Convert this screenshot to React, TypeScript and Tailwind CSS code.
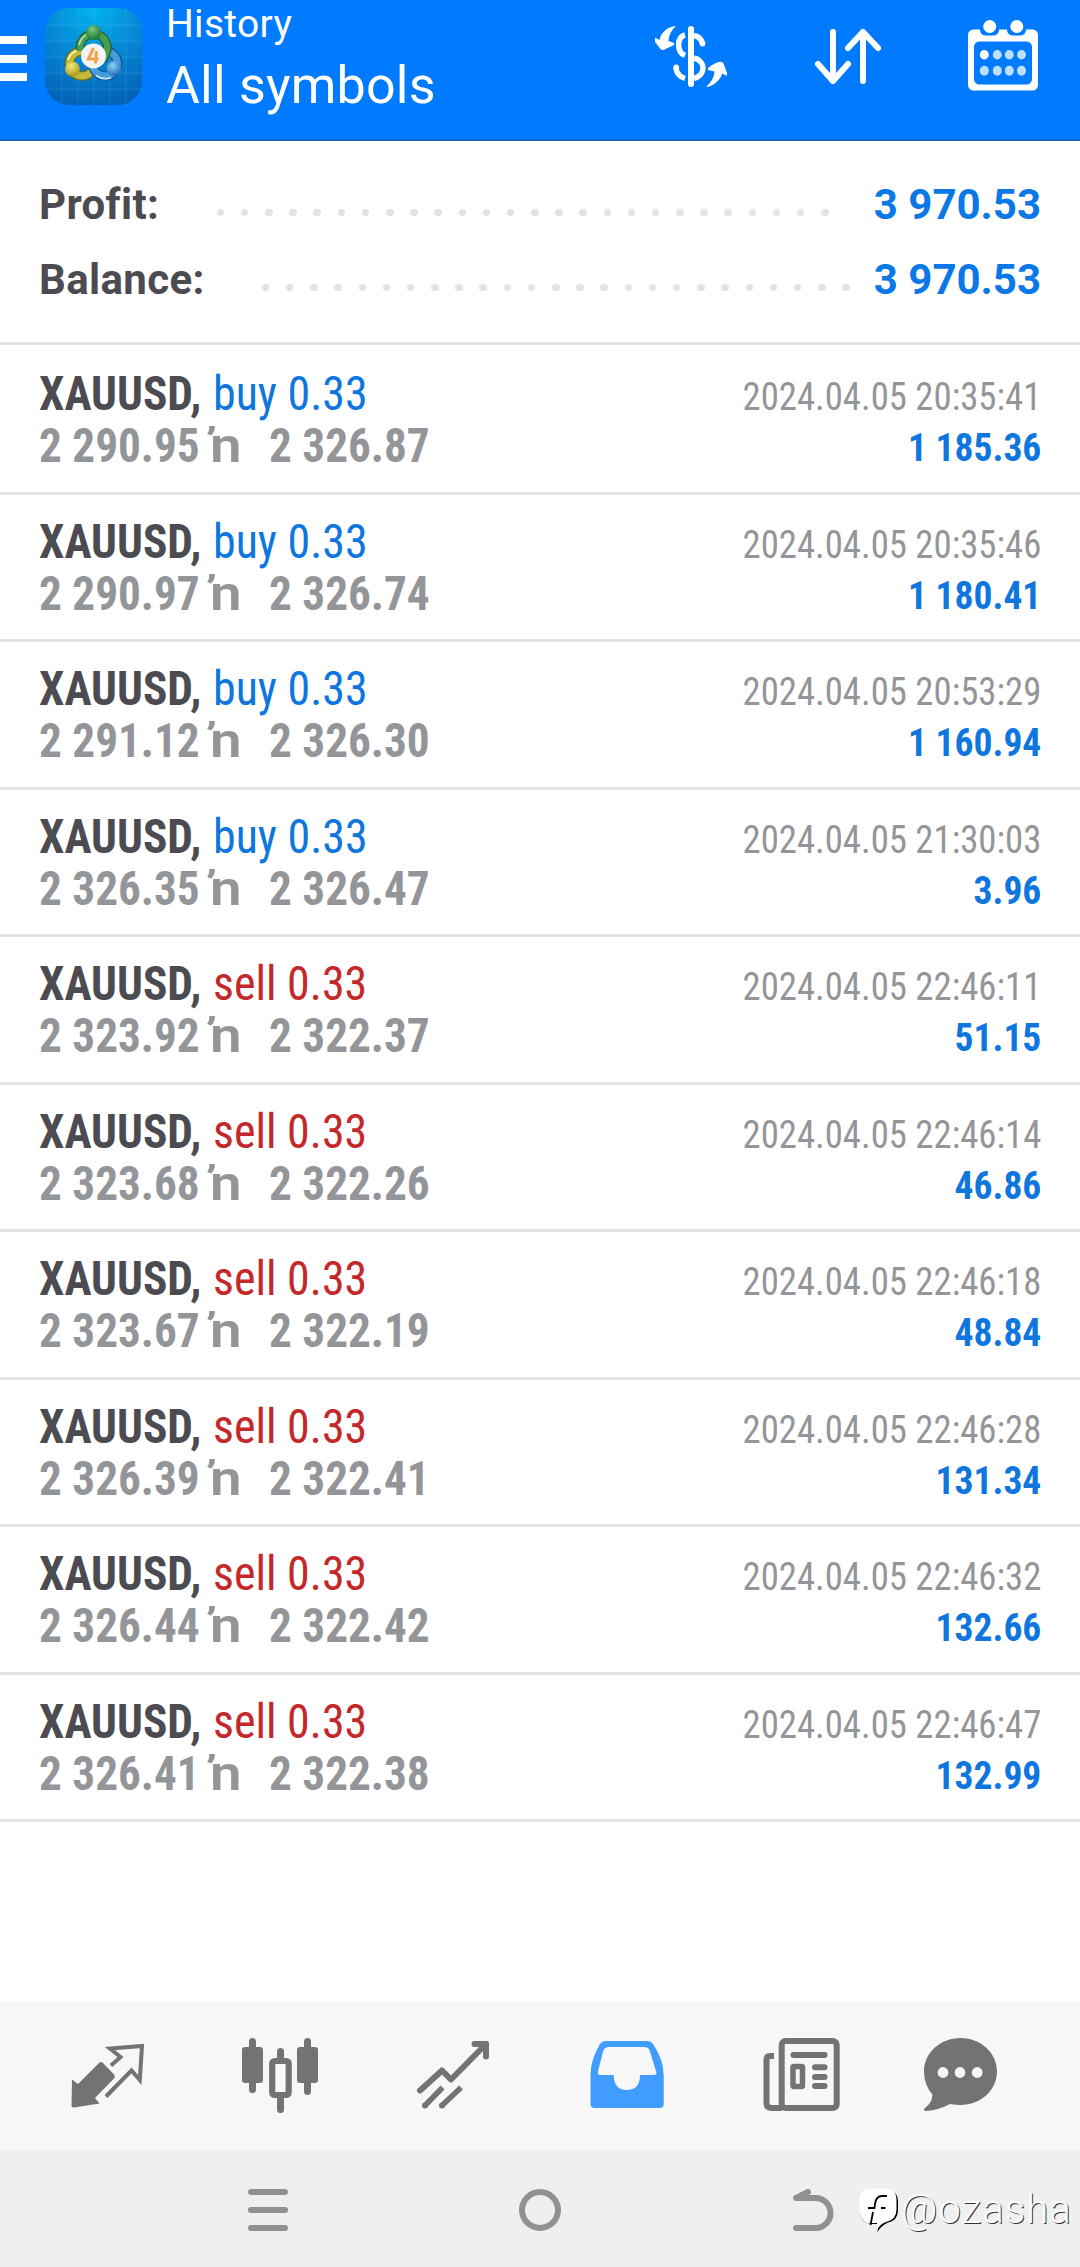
import clsx from 'clsx';

type Deal = {
  symbol: string;
  side: 'buy' | 'sell';
  volume: string;
  open: string;
  close: string;
  time: string;
  profit: string;
};

const DEALS: Deal[] = [
  { symbol: 'XAUUSD', side: 'buy', volume: '0.33', open: '2 290.95', close: '2 326.87', time: '2024.04.05 20:35:41', profit: '1 185.36' },
  { symbol: 'XAUUSD', side: 'buy', volume: '0.33', open: '2 290.97', close: '2 326.74', time: '2024.04.05 20:35:46', profit: '1 180.41' },
  { symbol: 'XAUUSD', side: 'buy', volume: '0.33', open: '2 291.12', close: '2 326.30', time: '2024.04.05 20:53:29', profit: '1 160.94' },
  { symbol: 'XAUUSD', side: 'buy', volume: '0.33', open: '2 326.35', close: '2 326.47', time: '2024.04.05 21:30:03', profit: '3.96' },
  { symbol: 'XAUUSD', side: 'sell', volume: '0.33', open: '2 323.92', close: '2 322.37', time: '2024.04.05 22:46:11', profit: '51.15' },
  { symbol: 'XAUUSD', side: 'sell', volume: '0.33', open: '2 323.68', close: '2 322.26', time: '2024.04.05 22:46:14', profit: '46.86' },
  { symbol: 'XAUUSD', side: 'sell', volume: '0.33', open: '2 323.67', close: '2 322.19', time: '2024.04.05 22:46:18', profit: '48.84' },
  { symbol: 'XAUUSD', side: 'sell', volume: '0.33', open: '2 326.39', close: '2 322.41', time: '2024.04.05 22:46:28', profit: '131.34' },
  { symbol: 'XAUUSD', side: 'sell', volume: '0.33', open: '2 326.44', close: '2 322.42', time: '2024.04.05 22:46:32', profit: '132.66' },
  { symbol: 'XAUUSD', side: 'sell', volume: '0.33', open: '2 326.41', close: '2 322.38', time: '2024.04.05 22:46:47', profit: '132.99' },
];

function AppLogo() {
  return (
    <svg width="97" height="97" viewBox="0 0 97 97">
      <defs>
        <radialGradient id="tile" cx="0.5" cy="0" r="1">
          <stop offset="0" stopColor="#00b4f0" />
          <stop offset="0.5" stopColor="#0788d4" />
          <stop offset="1" stopColor="#0263b8" />
        </radialGradient>
        <radialGradient id="green" cx="0.4" cy="0.3" r="0.7">
          <stop offset="0" stopColor="#7cc47a" />
          <stop offset="1" stopColor="#1c7a34" />
        </radialGradient>
        <radialGradient id="yellow" cx="0.4" cy="0.3" r="0.7">
          <stop offset="0" stopColor="#f2ea80" />
          <stop offset="1" stopColor="#a89a1c" />
        </radialGradient>
        <radialGradient id="blue" cx="0.4" cy="0.3" r="0.7">
          <stop offset="0" stopColor="#8fd0f5" />
          <stop offset="1" stopColor="#1c70b8" />
        </radialGradient>
      </defs>
      <rect width="97" height="97" rx="24" fill="url(#tile)" />
      <path
        d="M17 0V97M33 0V97M49 0V97M65 0V97M81 0V97M0 17H97M0 33H97M0 49H97M0 65H97M0 81H97"
        stroke="#8fdcff"
        strokeOpacity="0.16"
        fill="none"
      />
      <g fill="none">
        <circle cx="37" cy="55.500" r="12.500" stroke="#6f6f1a" strokeWidth="9.500" />
        <circle cx="37" cy="55.500" r="12.500" stroke="#c4ba3a" strokeWidth="7" />
        <circle cx="60" cy="55.500" r="12.500" stroke="#0d5796" strokeWidth="9.500" />
        <circle cx="60" cy="55.500" r="12.500" stroke="#459cd8" strokeWidth="7" />
        <path d="M35.500 42.500A13.500 13.500 0 1 1 61 45Q60 49 57 52" stroke="#176436" strokeWidth="9" />
        <path d="M35.500 42.500A13.500 13.500 0 1 1 61 45Q60 49 57 52" stroke="#4a9c50" strokeWidth="6.500" />
        <path d="M34 37A16 16 0 0 1 41 27" stroke="#b8e0b0" strokeWidth="1.800" />
        <path d="M23 52A15 15 0 0 1 32 42.500" stroke="#fbf6b0" strokeWidth="1.800" />
        <path d="M51 67.500A16 16 0 0 0 66 69.500" stroke="#c0e6fb" strokeWidth="1.800" />
      </g>
      <circle cx="48.700" cy="24.500" r="7.500" fill="url(#green)" />
      <circle cx="27.500" cy="61" r="7.500" fill="url(#yellow)" />
      <circle cx="69" cy="60.500" r="7.500" fill="url(#blue)" />
      <circle cx="48.500" cy="48" r="12.500" fill="#f4f4f4" />
      <path d="M48.500 40L43.500 51H53.500M51.500 43L50.500 55.500" stroke="#f3a04a" strokeWidth="3" fill="none" />
    </svg>
  );
}

function CurrencyIcon() {
  return (
    <svg width="80" height="70" viewBox="650 22 80 70" fill="none" stroke="#fff">
      <path d="M691 29V84" strokeWidth="6" strokeLinecap="round" />
      <path d="M685 35C676.500 37 676.500 52 685 55.500M694 35.500Q701 37 702.500 43.500M694 58C706 61 706 75 694 78.500M676 68Q677 76 685 78.500" strokeWidth="5.500" />
      <circle cx="702.500" cy="43.500" r="2.900" fill="#fff" stroke="none" />
      <circle cx="676.200" cy="67.500" r="2.900" fill="#fff" stroke="none" />
      <path
        d="M676 26C668 26.500 661 32 659.500 40L655 37.500V42L660.500 49Q661.500 50.500 664 49.800L674 45V43L668.500 41Q669 32 676 26Z"
        fill="#fff"
        stroke="none"
      />
      <path
        d="M706 87C714 86 720.500 80 722 73.500L727 76V73L723.500 63.500Q722.500 61.500 720 61.800Q714 63 708 68V70L714.500 71.500Q714 80 706 87Z"
        fill="#fff"
        stroke="none"
      />
    </svg>
  );
}

function SortIcon() {
  return (
    <svg
      width="70"
      height="60"
      viewBox="813 27 70 60"
      fill="none"
      stroke="#fff"
      strokeWidth="6"
      strokeLinecap="round"
      strokeLinejoin="round"
    >
      <path d="M833 32V81M818 64L833 81L848 64" />
      <path d="M863 81V32M848 48L863 32L878 48" />
    </svg>
  );
}

function CalendarIcon() {
  const columns = [984.3, 997.3, 1009.3, 1021.5];
  return (
    <svg width="70" height="71" viewBox="968 19.500 70 71">
      <rect x="968" y="29" width="70" height="61" rx="5.500" fill="#fff" />
      <rect x="974" y="41" width="58" height="43" rx="5.500" fill="#007aff" />
      <path d="M980 26V30Q981 35 986 35H993Q998 35 999 30V26ZM1007 26V30Q1008 35 1013 35H1020Q1025 35 1026 30V26Z" fill="#007aff" />
      <circle cx="989.700" cy="26" r="6.500" fill="#fff" />
      <circle cx="1016.800" cy="26" r="6.500" fill="#fff" />
      {columns.map((x, i) => (
        <g key={x}>
          <ellipse cx={x} cy="54.300" rx="4.500" ry="4.700" fill={i === 0 ? '#fff' : '#bfdfff'} />
          <ellipse cx={x} cy="70.200" rx="4.500" ry="5" fill="#bfdfff" />
        </g>
      ))}
    </svg>
  );
}

function Header() {
  return (
    <header className="flex h-[141px] items-start border-b-2 border-[#0f68c8] bg-[#007aff] text-white">
      <div className="mt-9 flex w-[27px] flex-col gap-[10.5px]">
        <span className="h-2 bg-white" />
        <span className="h-2 bg-white" />
        <span className="h-2 bg-white" />
      </div>
      <div className="mt-2 ml-[18px]">
        <AppLogo />
      </div>
      <div className="ml-6 flex-1">
        <div className="mt-px text-[39px] leading-[46px] tracking-[0.3px]">History</div>
        <div className="mt-2 text-[52px] leading-[62px] tracking-[0.2px]">All symbols</div>
      </div>
      <div className="mr-[42px] flex items-start">
        <div className="mt-[22px]">
          <CurrencyIcon />
        </div>
        <div className="mt-[27px] ml-[83px]">
          <SortIcon />
        </div>
        <div className="mt-[19.5px] ml-[85px]">
          <CalendarIcon />
        </div>
      </div>
    </header>
  );
}

function SummaryRow({ label, value, dots, className }: { label: string; value: string; dots: number; className: string }) {
  return (
    <div className="flex h-[75px] items-center justify-between text-[42px] font-bold">
      <span className="tracking-[0.35px] text-[#4c4b52]">{label}</span>
      <div className={clsx('mt-4 ml-auto flex justify-between', className)}>
        {Array.from({ length: dots }, (_, i) => (
          <span key={i} className="size-[7.5px] rounded-full bg-[#e3e3e4]" />
        ))}
      </div>
      <span className="text-[#0b78e8]">{value}</span>
    </div>
  );
}

function DealRow({ deal }: { deal: Deal }) {
  return (
    <div className="flex h-[147.5px] justify-between border-b-[3px] border-[#e3e3e4] px-[39px] font-stretch-condensed">
      <div className="pt-[22px] text-[47.5px] leading-[51px]">
        <div className="flex">
          <span className="w-[174px] origin-left scale-x-[0.955] font-bold text-[#4c4b52]">{deal.symbol},</span>
          <span className={clsx('origin-left scale-x-[0.967]', deal.side === 'buy' ? 'text-[#0e76de]' : 'text-[#c4282b]')}>
            {deal.side} {deal.volume}
          </span>
        </div>
        <div className="flex h-[51px] items-baseline font-bold text-[#949599]">
          <span className="w-[171px] origin-left scale-x-[0.952]">{deal.open}</span>
          <span className="w-[59px] origin-left scale-x-[1.18] text-[48px] font-semibold font-stretch-normal">ŉ</span>
          <span className="origin-left scale-x-[0.952]">{deal.close}</span>
        </div>
      </div>
      <div className="pt-[24px] text-right text-[39.5px] leading-[51px]">
        <div className="origin-right scale-x-[0.93] text-[#949599]">{deal.time}</div>
        <div className="origin-right scale-x-[0.95] font-bold text-[#0e76de]">{deal.profit}</div>
      </div>
    </div>
  );
}

function TabBar() {
  return (
    <nav className="flex h-[148px] items-center bg-[#f7f7f7] text-[#737373]">
      <svg width="1080" height="148" viewBox="0 2002 1080 148" fill="none" stroke="currentColor">
        {/* trade */}
        <path
          d="M72 2079.500L78 2084L99 2063Q101 2061 103 2063L114 2074.500Q115.500 2076.500 114 2078.500L95 2098L99.500 2103.500L74 2107.500Q71.500 2107.500 71.500 2105Z"
          fill="currentColor"
          stroke="none"
        />
        <path d="M111 2065.500L120.500 2057L110 2048.500L142 2046L139.800 2080L131.500 2070.500L106 2096.500" strokeWidth="4" />
        {/* quotes */}
        <path d="M252.500 2041.500V2089.500M307.500 2041.500V2091.500M280.500 2051.500V2060M280.500 2097V2109.500" strokeWidth="7" strokeLinecap="round" />
        <rect x="242" y="2047" width="21" height="36" rx="3" fill="currentColor" stroke="none" />
        <rect x="297" y="2047" width="21" height="36" rx="3" fill="currentColor" stroke="none" />
        <rect x="272.200" y="2061" width="16.500" height="34" rx="2.500" strokeWidth="6.200" />
        {/* charts */}
        <path
          d="M420 2090.500L442 2070.500L451 2079.500L486 2044M474.500 2044H486V2056.500"
          strokeWidth="6"
          strokeLinecap="round"
          strokeLinejoin="round"
        />
        <path d="M425 2105.500L442.500 2087.500M442 2105.500L461 2087.500" strokeWidth="5.500" />
        <path d="M425 2105.500h.01M442 2105.500h.01" strokeWidth="6" strokeLinecap="round" />
        {/* history */}
        <path
          d="M605 2041H647Q651 2041 653 2044Q663.700 2060 663.700 2075V2104Q663.700 2108 659.500 2108H595Q590.500 2108 590.500 2104V2075Q590.500 2060 600 2044Q602 2041 605 2041ZM609 2047Q605 2047 603.500 2050L598 2071Q597.500 2075 600 2075H613.700Q614 2090 626.500 2090Q640 2090 640 2075H654Q657 2075 656.300 2072L649.500 2050Q648 2047 644 2047Z"
          fill="#409cff"
          fillRule="evenodd"
          stroke="none"
        />
        {/* news */}
        <rect x="781.700" y="2041" width="55" height="67" rx="4" strokeWidth="6" />
        <path d="M774 2056H770Q766.500 2056 766.500 2060V2103Q766.500 2108 772 2108H782" strokeWidth="6" />
        <path d="M793.500 2055H824.500M815 2067.300H824.500M815 2077H824.500M815 2086H824.500" strokeWidth="6" strokeLinecap="round" />
        <rect x="793" y="2066.500" width="9.500" height="20" rx="1" strokeWidth="5.500" />
        {/* chat */}
        <path
          d="M960.500 2038C981 2038 997 2053 997 2071.500C997 2090 981 2105 960.500 2105Q955 2105 950 2104Q937 2111 925 2111Q923 2110 925 2108Q932 2103 932.500 2094.500Q924 2085 924 2071.500C924 2053 940 2038 960.500 2038Z"
          fill="currentColor"
          stroke="none"
        />
        <path d="M943 2072.500h.01M960 2072.500h.01M977.200 2072.500h.01" stroke="#f7f7f7" strokeWidth="10.800" strokeLinecap="round" />
      </svg>
    </nav>
  );
}

function Watermark() {
  return (
    <div className="flex items-center">
      <svg width="40" height="46" viewBox="858 2186 40 46">
        <path
          d="M872 2190H886Q898 2190 898 2202V2210Q898 2221 887 2223Q881 2226 877.500 2232L878 2224H872Q860 2223 860 2210V2202Q860 2190 872 2190Z"
          fill="#000"
        />
        <path
          d="M871 2188.500H885Q896.500 2188.500 896.500 2200V2209Q896.500 2220 886 2222Q880 2224 877 2230V2223H867Q859.500 2219 859.500 2209V2200Q859.500 2188.500 871 2188.500Z"
          fill="#fff"
        />
        <path d="M887 2196H882Q876 2196 875 2204L874.500 2208H868M873 2212L870.500 2225M881 2208H885.500" fill="none" stroke="#000" strokeWidth="1.800" />
      </svg>
      <span className="ml-[3px] text-[41px] leading-[46px] font-light tracking-[1.3px] text-white [text-shadow:1px_1px_0_#333]">
        <span className="inline-block origin-left scale-x-[0.97]">@ozasha</span>
      </span>
    </div>
  );
}

function SystemBar() {
  return (
    <div className="flex h-[117px] items-start bg-[#efefef] pt-[36px]">
      <div className="mt-[3px] ml-[248px] flex w-10 flex-col gap-3">
        <span className="h-1.5 rounded-full bg-[#919191]" />
        <span className="h-1.5 rounded-full bg-[#919191]" />
        <span className="h-1.5 rounded-full bg-[#919191]" />
      </div>
      <div className="mt-[3px] ml-[231px] size-[42px] rounded-full border-6 border-[#919191]" />
      <svg className="mt-[1px] ml-[230px]" width="46" height="46" viewBox="791 2187 46 46" fill="none" stroke="#919191" strokeWidth="6" strokeLinecap="round" strokeLinejoin="round">
        <path d="M808 2192L796 2198H815.500A15 15 0 0 1 815.500 2228H796" />
      </svg>
      <div className="ml-[21px]">
        <Watermark />
      </div>
    </div>
  );
}

export default function App() {
  return (
    <div className="flex h-[2267px] w-[1080px] flex-col overflow-hidden bg-white font-['Roboto',sans-serif]">
      <Header />
      <section className="h-[204px] border-b-[3px] border-[#e3e3e4] px-[39px] pt-[26px]">
        <SummaryRow label="Profit:" value="3 970.53" dots={26} className="mr-[45px] w-[612px]" />
        <SummaryRow label="Balance:" value="3 970.53" dots={25} className="mr-[24px] w-[588px]" />
      </section>
      <main className="flex-1 pt-[2px]">
        {DEALS.map((deal) => (
          <DealRow key={deal.time} deal={deal} />
        ))}
      </main>
      <TabBar />
      <SystemBar />
    </div>
  );
}
